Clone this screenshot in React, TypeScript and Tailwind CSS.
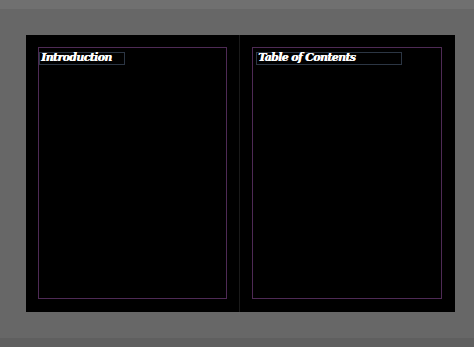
export default function App() {
  return (
    <div className="flex h-[347px] w-[474px] flex-col overflow-hidden bg-[#676767]">
      <div className="h-[9px] bg-[#707070]" />
      <div className="flex-1 pt-[26px] pl-[26px]">
        <div className="flex h-[277px] w-[429px] bg-black">
          <Page title="Introduction" frameWidth="w-[86px]" inset="pl-0" className="w-[213px] p-[12px] pb-[13px]" />
          <div className="w-px bg-[#1a1a1a]" />
          <Page title="Table of Contents" frameWidth="w-[146px]" inset="pl-[3px]" className="flex-1 p-[12px] pr-[13px] pb-[13px]" />
        </div>
      </div>
      <div className="h-[9px] bg-[#5f5f5f]" />
    </div>
  );
}

function Page({
  title,
  frameWidth,
  inset,
  className,
}: {
  title: string;
  frameWidth: string;
  inset: string;
  className: string;
}) {
  return (
    <div className={className}>
      <div className={`h-full border border-[#4e2a55] pt-[4px] ${inset}`}>
        <div
          className={`h-[13px] border border-[#2c3644] pl-[1px] text-[11px] leading-[10px] font-bold tracking-[-0.65px] text-white italic [text-shadow:0.4px_0_0_#fff] ${frameWidth}`}
          style={{ fontFamily: '"DejaVu Serif", serif' }}
        >
          {title}
        </div>
      </div>
    </div>
  );
}
